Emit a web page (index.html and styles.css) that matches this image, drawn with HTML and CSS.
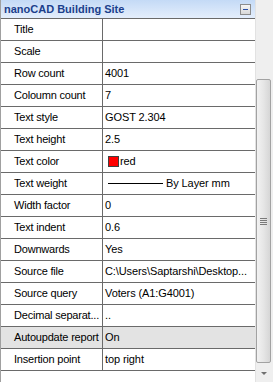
FILE: index.html
```html
<!DOCTYPE html>
<html>
<head>
    <title>nanoCAD Building Site</title>
    <link rel="stylesheet" href="styles.css">
</head>
<body>
    <div class="panel">
        <div class="main">
            <div class="header">
                <span class="title">nanoCAD Building Site</span>
                <span class="collapse"><span class="minus"></span></span>
            </div>
            <div class="grid">
                <div class="row"><div class="name">Title</div><div class="value"></div></div>
                <div class="row"><div class="name">Scale</div><div class="value"></div></div>
                <div class="row"><div class="name">Row count</div><div class="value">4001</div></div>
                <div class="row"><div class="name">Coloumn count</div><div class="value">7</div></div>
                <div class="row"><div class="name">Text style</div><div class="value">GOST 2.304</div></div>
                <div class="row"><div class="name">Text height</div><div class="value">2.5</div></div>
                <div class="row"><div class="name">Text color</div><div class="value"><span class="swatch"></span>red</div></div>
                <div class="row"><div class="name">Text weight</div><div class="value"><span class="weight-line"></span>By Layer mm</div></div>
                <div class="row"><div class="name">Width factor</div><div class="value">0</div></div>
                <div class="row"><div class="name">Text indent</div><div class="value">0.6</div></div>
                <div class="row"><div class="name">Downwards</div><div class="value">Yes</div></div>
                <div class="row"><div class="name">Source file</div><div class="value">C:\Users\Saptarshi\Desktop...</div></div>
                <div class="row"><div class="name">Source query</div><div class="value">Voters (A1:G4001)</div></div>
                <div class="row"><div class="name">Decimal separat...</div><div class="value">..</div></div>
                <div class="row selected"><div class="name">Autoupdate report</div><div class="value">On</div></div>
                <div class="row"><div class="name">Insertion point</div><div class="value">top right</div></div>
            </div>
        </div>
        <div class="scrollbar">
            <div class="track"></div>
            <div class="thumb"><span class="grip"></span></div>
            <div class="track-end"></div>
            <div class="arrow"><span class="tri"></span></div>
        </div>
    </div>
</body>
</html>
```

FILE: styles.css
```css
body {
    margin: 0;
    font-family: "Liberation Sans", Arial, sans-serif;
    font-size: 11px;
    color: #000;
    background: #fff;
    overflow: hidden;
}
.panel {
    display: flex;
    width: 273px;
    height: 382px;
}
.main {
    width: 255px;
    border-left: 1px solid #a0a0a0;
    background: #fff;
}
.header {
    height: 18px;
    display: flex;
    align-items: center;
    justify-content: space-between;
    padding: 0 3px 0 3px;
    background: linear-gradient(#c4daf6, #e4eefc);
}
.title {
    font-weight: bold;
    font-size: 11px;
    color: #1b3f8c;
}
.collapse {
    width: 9px;
    height: 9px;
    border: 1px solid #8c8c8c;
    background: linear-gradient(#f6f6f6, #d8d8d8);
    display: flex;
    align-items: center;
    justify-content: center;
    margin-right: 1px;
}
.minus {
    width: 5px;
    height: 1px;
    background: #2a4fa8;
}
.grid {
    border-top: 1px solid #6a6a6a;
}
.row {
    display: flex;
    height: 21px;
    border-bottom: 1px solid #6a6a6a;
    line-height: 21px;
}
.row.selected {
    background: #e3e3e3;
}
.name {
    width: 88px;
    padding-left: 13px;
    border-right: 1px solid #6a6a6a;
    white-space: nowrap;
    overflow: hidden;
    letter-spacing: -0.2px;
}
.value {
    flex: 1;
    padding-left: 2px;
    white-space: nowrap;
    display: flex;
    align-items: center;
    letter-spacing: -0.1px;
}
.swatch {
    width: 9px;
    height: 9px;
    background: #ff0000;
    border: 1px solid #404040;
    margin: 0 1px 0 3px;
}
.weight-line {
    width: 55px;
    height: 1px;
    background: #000;
    margin: 0 3px 0 3px;
}
.scrollbar {
    width: 18px;
    background: #efefef;
    border-left: 1px solid #e2e2e2;
    display: flex;
    flex-direction: column;
    box-sizing: border-box;
}
.track {
    height: 79px;
}
.thumb {
    height: 284px;
    margin: 0 2px 0 0;
    border: 1px solid #a2a2a2;
    border-radius: 2px;
    background: linear-gradient(to right, #f2f2f2, #e6e6e6 50%, #d6d6d6);
    box-sizing: border-box;
    display: flex;
    align-items: center;
    justify-content: center;
}
.grip {
    width: 7px;
    height: 7px;
    background: repeating-linear-gradient(#7a7a7a 0 1px, transparent 1px 2px);
}
.track-end {
    height: 2px;
}
.arrow {
    flex: 1;
    display: flex;
    align-items: center;
    justify-content: center;
}
.tri {
    width: 0;
    height: 0;
    border-left: 3px solid transparent;
    border-right: 3px solid transparent;
    border-top: 3px solid #707070;
    margin-right: 2px;
}
```
